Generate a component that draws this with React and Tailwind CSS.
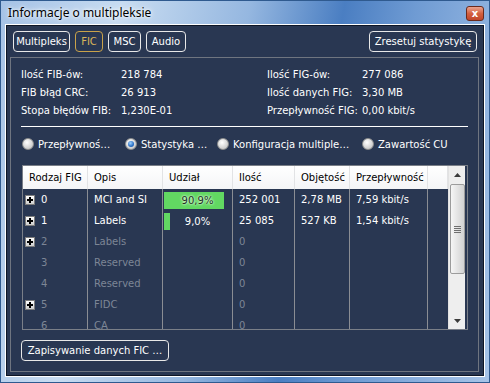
import React from "react";

const font = { fontFamily: "'DejaVu Sans', Verdana, sans-serif" };

const rows = [
  { plus: true, id: "0", opis: "MCI and SI", pct: 90.9, label: "90,9%", ilosc: "252 001", obj: "2,78 MB", rate: "7,59 kbit/s", active: true },
  { plus: true, id: "1", opis: "Labels", pct: 9, label: "9,0%", ilosc: "25 085", obj: "527 KB", rate: "1,54 kbit/s", active: true },
  { plus: true, id: "2", opis: "Labels", ilosc: "0" },
  { id: "3", opis: "Reserved", ilosc: "0" },
  { id: "4", opis: "Reserved", ilosc: "0" },
  { plus: true, id: "5", opis: "FIDC", ilosc: "0" },
  { id: "6", opis: "CA", ilosc: "0" },
];

function PlusBox() {
  return (
    <span className="relative inline-block w-[10px] h-[10px] border border-[#7d7d7d] bg-gradient-to-b from-white to-[#cfcfcf] shrink-0">
      <span className="absolute left-[1px] top-[3px] w-[6px] h-[2px] bg-black" />
      <span className="absolute left-[3px] top-[1px] w-[2px] h-[6px] bg-black" />
    </span>
  );
}

function Radio({ checked, label, w }) {
  return (
    <div className={`flex items-center gap-[4px] ${w}`}>
      <span className="relative w-[12px] h-[12px] rounded-full border border-[#8e8f8f] bg-[radial-gradient(circle_at_40%_35%,#ffffff,#d4d4d4_60%,#b8b8b8)] shrink-0">
        {checked && (
          <span className="absolute left-[2px] top-[2px] w-[6px] h-[6px] rounded-full bg-[radial-gradient(circle_at_40%_35%,#9fd2ff,#2a6fc4_60%,#1b4f95)]" />
        )}
      </span>
      <span className="text-white text-[10px] whitespace-nowrap">{label}</span>
    </div>
  );
}

function Btn({ children, w, active }) {
  return (
    <div
      className={`h-[21px] ${w} rounded-[4px] border flex items-center justify-center text-[10px] ${
        active ? "border-[#c9a24a] text-[#d9b45a]" : "border-[#e8e8e8] text-white"
      }`}
    >
      {children}
    </div>
  );
}

export default function App() {
  const cols = "grid grid-cols-[65px_75px_70px_62px_55px_78px_20px]";
  return (
    <div
      className="w-[490px] h-[383px] flex flex-col border border-[#2f5a8f] bg-[linear-gradient(100deg,#a5c2e6_0%,#c8dcf1_22%,#95b7e0_45%,#4a7ec2_62%,#6f9bd3_75%,#a7c4e8_100%)] overflow-hidden"
      style={font}
    >
      {/* Title bar */}
      <div className="h-[23px] flex items-center justify-between pl-[7px] pr-[5px]">
        <span
          className="text-[12px] text-black [text-shadow:0_0_6px_#ffffff,0_0_3px_#ffffff]"
          style={{ fontFamily: "'Noto Sans', 'DejaVu Sans', sans-serif" }}
        >
          Informacje o multipleksie
        </span>
        <div className="w-[18px] h-[15px] mt-[2px] rounded-[3px] border border-[#6b2a1c] bg-gradient-to-b from-[#e9a38f] via-[#d4603f] to-[#c0452a] flex items-center justify-center">
          <span className="text-white text-[10px] font-bold leading-none">x</span>
        </div>
      </div>

      {/* Client area */}
      <div className="flex-1 mx-[4px] mb-[5px] border border-white">
        <div className="h-full border border-[#0e1626] bg-[#293752] flex flex-col">
          {/* Top buttons */}
          <div className="flex items-center pt-[5px] pl-[6px] pr-[6px]">
            <div className="flex gap-[5px]">
              <Btn w="w-[57px]">Multipleks</Btn>
              <Btn w="w-[28px]" active>FIC</Btn>
              <Btn w="w-[33px]">MSC</Btn>
              <Btn w="w-[40px]">Audio</Btn>
            </div>
            <div className="ml-auto">
              <Btn w="w-[108px]">Zresetuj statystykę</Btn>
            </div>
          </div>

          {/* Panel */}
          <div className="flex-1 mt-[5px] ml-[3px] mr-[4px] mb-[3px] border border-[#6f7580] flex flex-col pt-[7px] px-[10px]">
            <div className="flex text-white text-[10px]">
              <div className="w-[246px] flex flex-col">
                {[
                  ["Ilość FIB-ów:", "218 784"],
                  ["FIB błąd CRC:", "26 913"],
                  ["Stopa błędów FIB:", "1,230E-01"],
                ].map(([l, v]) => (
                  <div key={l} className="h-[18px] flex items-center">
                    <span className="w-[100px]">{l}</span>
                    <span>{v}</span>
                  </div>
                ))}
              </div>
              <div className="flex flex-col">
                {[
                  ["Ilość FIG-ów:", "277 086"],
                  ["Ilość danych FIG:", "3,30 MB"],
                  ["Przepływność FIG:", "0,00 kbit/s"],
                ].map(([l, v]) => (
                  <div key={l} className="h-[18px] flex items-center">
                    <span className="w-[95px]">{l}</span>
                    <span>{v}</span>
                  </div>
                ))}
              </div>
            </div>

            <div className="mt-[7px] h-[1px] bg-white" />

            <div className="mt-[8px] h-[18px] flex items-center pl-[1px]">
              <Radio w="w-[103px]" label="Przepływnoś…" />
              <Radio w="w-[92px]" checked label="Statystyka …" />
              <Radio w="w-[145px]" label="Konfiguracja multiple…" />
              <Radio label="Zawartość CU" />
            </div>

            {/* Table */}
            <div className="mt-[12px] ml-[1px] h-[165px] border border-[#7a7f88] flex overflow-hidden">
              <div className="flex flex-col w-[425px]">
                <div className={`${cols} h-[23px] bg-gradient-to-b from-white to-[#f4f5f7] text-black text-[10px]`}>
                  {["Rodzaj FIG", "Opis", "Udział", "Ilość", "Objętość", "Przepływność", ""].map((h, i) => (
                    <div key={i} className="flex items-center pl-[6px] border-r border-[#e2e3e5]">
                      {h}
                    </div>
                  ))}
                </div>
                <div className="flex-1 overflow-hidden">
                  {rows.map((r) => {
                    const c = r.active ? "text-white" : "text-[#7d8696]";
                    return (
                      <div key={r.id} className={`${cols} h-[21px] text-[10px] ${c}`}>
                        <div className="flex items-center pl-[2px] gap-[6px] border-r border-[#8a8d93]">
                          {r.plus ? <PlusBox /> : <span className="w-[10px]" />}
                          <span>{r.id}</span>
                        </div>
                        <div className="flex items-center pl-[6px] border-r border-[#8a8d93]">{r.opis}</div>
                        <div className="relative flex items-center px-[1px] border-r border-[#8a8d93]">
                          {r.pct != null && (
                            <>
                              <div className="w-[66px] h-[17px] mt-[1px]">
                                <div className="h-full bg-[#62d862]" style={{ width: `${r.pct}%` }} />
                              </div>
                              <span
                                className={`absolute inset-0 flex items-center justify-center pt-[1px] ${
                                  r.pct > 50 ? "text-[#24321f] [text-shadow:0_0_2px_#e8ffe8,0_0_3px_#e8ffe8]" : "text-white"
                                }`}
                              >
                                {r.label}
                              </span>
                            </>
                          )}
                        </div>
                        <div className="flex items-center pl-[6px] border-r border-[#8a8d93]">{r.ilosc}</div>
                        <div className="flex items-center pl-[6px] border-r border-[#8a8d93]">{r.obj}</div>
                        <div className="flex items-center pl-[6px] border-r border-[#8a8d93]">{r.rate}</div>
                        <div />
                      </div>
                    );
                  })}
                </div>
              </div>

              {/* Scrollbar */}
              <div className="w-[17px] bg-[#eeeeee] border-l border-[#e2e2e2] flex flex-col items-center">
                <div className="h-[18px] w-full flex items-center justify-center">
                  <svg width="7" height="4" viewBox="0 0 7 4">
                    <path d="M0 4 L3.5 0 L7 4 Z" fill="#3a3a3a" />
                  </svg>
                </div>
                <div className="w-[15px] h-[90px] rounded-[2px] border border-[#9c9c9c] bg-gradient-to-r from-[#f6f6f6] via-[#e4e4e4] to-[#d2d2d2] flex flex-col items-center justify-center gap-[1px]">
                  <span className="w-[7px] h-[1px] bg-[#6f6f6f]" />
                  <span className="w-[7px] h-[1px] bg-[#6f6f6f]" />
                  <span className="w-[7px] h-[1px] bg-[#6f6f6f]" />
                  <span className="w-[7px] h-[1px] bg-[#6f6f6f]" />
                </div>
                <div className="flex-1" />
                <div className="h-[16px] w-full flex items-center justify-center">
                  <svg width="7" height="4" viewBox="0 0 7 4">
                    <path d="M0 0 L7 0 L3.5 4 Z" fill="#3a3a3a" />
                  </svg>
                </div>
              </div>
            </div>

            <div className="mt-[10px]">
              <Btn w="w-[148px]">Zapisywanie danych FIC …</Btn>
            </div>
          </div>
        </div>
      </div>
    </div>
  );
}
